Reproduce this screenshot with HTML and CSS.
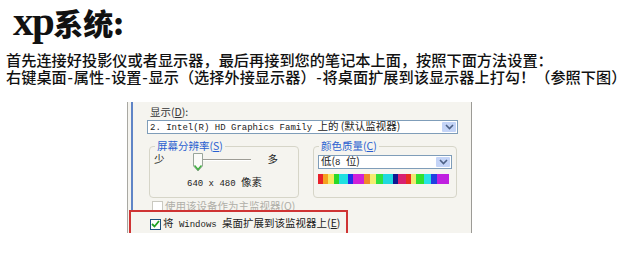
FILE: index.html
```html
<!DOCTYPE html>
<html lang="zh">
<head>
  <meta charset="UTF-8" />
  <title>xp系统</title>
  <link rel="stylesheet" href="styles.css">
</head>
<body>

<h1 class="title"><span class="title-latin">xp</span>系统:</h1>

<p class="intro">
  首先连接好投影仪或者显示器，最后再接到您的笔记本上面，按照下面方法设置：<br>
  右键桌面<span class="dash">-</span>属性<span class="dash">-</span>设置<span class="dash">-</span>显示（选择外接显示器）<span class="dash">-</span>将桌面扩展到该显示器上打勾！（参照下图）
</p>

<!-- screenshot of the display properties tab -->
<div class="shot">
  <div class="panel">
    <div class="panel-inner">
      <div class="label">显示(<u>D</u>):</div>
      <div class="select select-wide">
        <span class="select-text"><span class="mono">2. Intel(R) HD Graphics Family </span>上的 (默认监视器)</span>
        <span class="select-btn">
          <svg width="9" height="6" viewBox="0 0 9 6"><path d="M1 1 L4.5 4.5 L8 1" fill="none" stroke="#4d6185" stroke-width="1.6"/></svg>
        </span>
      </div>

      <div class="groups">
        <fieldset class="group group-res">
          <legend>屏幕分辨率(<u>S</u>)</legend>
          <div class="slider-row">
            <span>少</span>
            <div class="slider">
              <div class="track"></div>
              <svg class="thumb" width="10" height="19" viewBox="0 0 10 19">
                <path d="M0.5 0.5 H9.5 V13 L5 18 L0.5 13 Z" fill="#fbfbf8" stroke="#9aa59a"/>
                <path d="M1.5 12.5 L5 16.5 L8.5 12.5" fill="none" stroke="#3fae3f" stroke-width="1.5"/>
              </svg>
            </div>
            <span>多</span>
          </div>
          <div class="res-value"><span class="mono">640 x 480 </span>像素</div>
        </fieldset>

        <fieldset class="group group-color">
          <legend>颜色质量(<u>C</u>)</legend>
          <div class="select">
            <span class="select-text">低(<span class="mono">8 </span>位)</span>
            <span class="select-btn">
              <svg width="9" height="6" viewBox="0 0 9 6"><path d="M1 1 L4.5 4.5 L8 1" fill="none" stroke="#4d6185" stroke-width="1.6"/></svg>
            </span>
          </div>
          <div class="spectrum"></div>
        </fieldset>
      </div>

      <div class="check check-disabled">
        <span class="box"></span>
        <span>使用该设备作为主监视器(<u>O</u>)</span>
      </div>

      <div class="mark">
        <div class="check">
          <span class="box box-on">
            <svg width="9" height="8" viewBox="0 0 9 8"><path d="M1 4 L3.5 6.5 L8 1" fill="none" stroke="#21a121" stroke-width="1.8"/></svg>
          </span>
          <span>将<span class="mono"> Windows </span>桌面扩展到该监视器上(<u>E</u>)</span>
        </div>
      </div>
    </div>
  </div>
</div>

</body>
</html>
```

FILE: styles.css
```css
body {
  margin: 0;
  background: #fff;
  color: #111;
  font-family: "Noto Sans CJK SC", sans-serif;
}

.title {
  margin: 0;
  padding: 0 0 0 13px;
  height: 42px;
  font-size: 30px;
  line-height: 42px;
  font-weight: 900;
  color: #111;
}

.title-latin {
  font-family: "Liberation Serif", serif;
  font-size: 41px;
  font-weight: bold;
  letter-spacing: -1.5px;
}

.intro {
  margin: 9px 0 0 6px;
  font-size: 15.2px;
  line-height: 17px;
  font-weight: 500;
  white-space: nowrap;
}

.dash {
  display: inline-block;
  width: 7px;
  text-align: center;
}

/* screenshot */
.shot {
  margin: 17px 0 0 127px;
  width: 345px;
  height: 131px;
}

.panel {
  height: 100%;
  background: #f5f4ef;
  border-left: 1px solid #a9a8a2;
  border-right: 1px solid #9c9b96;
  box-sizing: border-box;
  padding-left: 3px;
}

.panel-inner {
  height: 100%;
  border-left: 2px solid #5f84c6;
  padding: 3px 0 0 14px;
  font-size: 10.5px;
  color: #222;
}

.mono {
  font-family: "Liberation Mono", monospace;
  font-size: 9px;
}

.label {
  padding-left: 3px;
  line-height: 13px;
  color: #333;
}

.select {
  display: flex;
  align-items: center;
  height: 14px;
  box-sizing: border-box;
  background: #fff;
  border: 1px solid #7f9db9;
  padding-left: 2px;
}

.select-wide {
  margin-top: 2px;
  width: 311px;
}

.select-text {
  flex: 1;
  line-height: 12px;
  white-space: nowrap;
}

.select-btn {
  display: flex;
  align-items: center;
  justify-content: center;
  width: 14px;
  height: 10px;
  margin-right: 1px;
  background: #c4d4f7;
  border-radius: 1px;
}

.groups {
  display: flex;
  gap: 14px;
  margin: 6px 0 0 2px;
}

.group {
  margin: 0;
  border: 1px solid #d6d5c8;
  border-radius: 4px;
  height: 58px;
  box-sizing: border-box;
  padding: 0 4px;
}

.group legend {
  padding: 0 2px;
  margin-left: 1px;
  line-height: 12px;
  color: #2a5fd0;
}

.group-res {
  width: 150px;
}

.group-color {
  width: 142px;
}

.slider-row {
  display: flex;
  align-items: flex-start;
  height: 21px;
  line-height: 12px;
  padding-top: 1px;
}

.slider {
  position: relative;
  width: 97px;
  height: 19px;
  margin-left: 6px;
}

.track {
  position: absolute;
  left: 26px;
  right: 17px;
  top: 6px;
  height: 1px;
  background: #9d9c95;
  border-bottom: 1px solid #fff;
}

.thumb {
  position: absolute;
  left: 22px;
  top: 0;
}

.res-value {
  margin-top: 2px;
  padding-left: 33px;
  line-height: 11px;
}

.group-color .select {
  margin-top: 3px;
  width: 134px;
}

.spectrum {
  margin-top: 5px;
  width: 131px;
  height: 10px;
  background: linear-gradient(to right,
    #e8202a 0 4%, #f5a020 4% 8%, #f6e860 8% 12%, #28d828 12% 16%,
    #20e0e0 16% 23%, #2030e8 23% 27%, #d020d8 27% 35%, #f08a28 35% 40%,
    #f4ec70 40% 44%, #30e040 44% 50%, #20d8e0 50% 57%, #101890 57% 61%,
    #d82070 61% 67%, #e83020 67% 71%, #f0e870 71% 75%, #30e030 75% 81%,
    #28e0e8 81% 86%, #2040e0 86% 91%, #c020e0 91% 100%);
}

.check {
  display: flex;
  align-items: center;
  gap: 2px;
  height: 12px;
  line-height: 12px;
  white-space: nowrap;
}

.box {
  display: flex;
  align-items: center;
  justify-content: center;
  width: 11px;
  height: 11px;
  box-sizing: border-box;
  border: 1px solid #1c5180;
  background: #fff;
}

.check-disabled {
  margin: 2px 0 0 5px;
  color: #b0afa8;
}

.check-disabled .box {
  border-color: #cac9c0;
}

.mark {
  margin: -2px 0 0 -18px;
  width: 219px;
  height: 28px;
  box-sizing: border-box;
  border: 2px solid #cf3434;
  background: #f5f4ef;
  padding: 6px 0 0 19px;
  position: relative;
}

.box-on {
  background: #fdfdfb;
}
```
